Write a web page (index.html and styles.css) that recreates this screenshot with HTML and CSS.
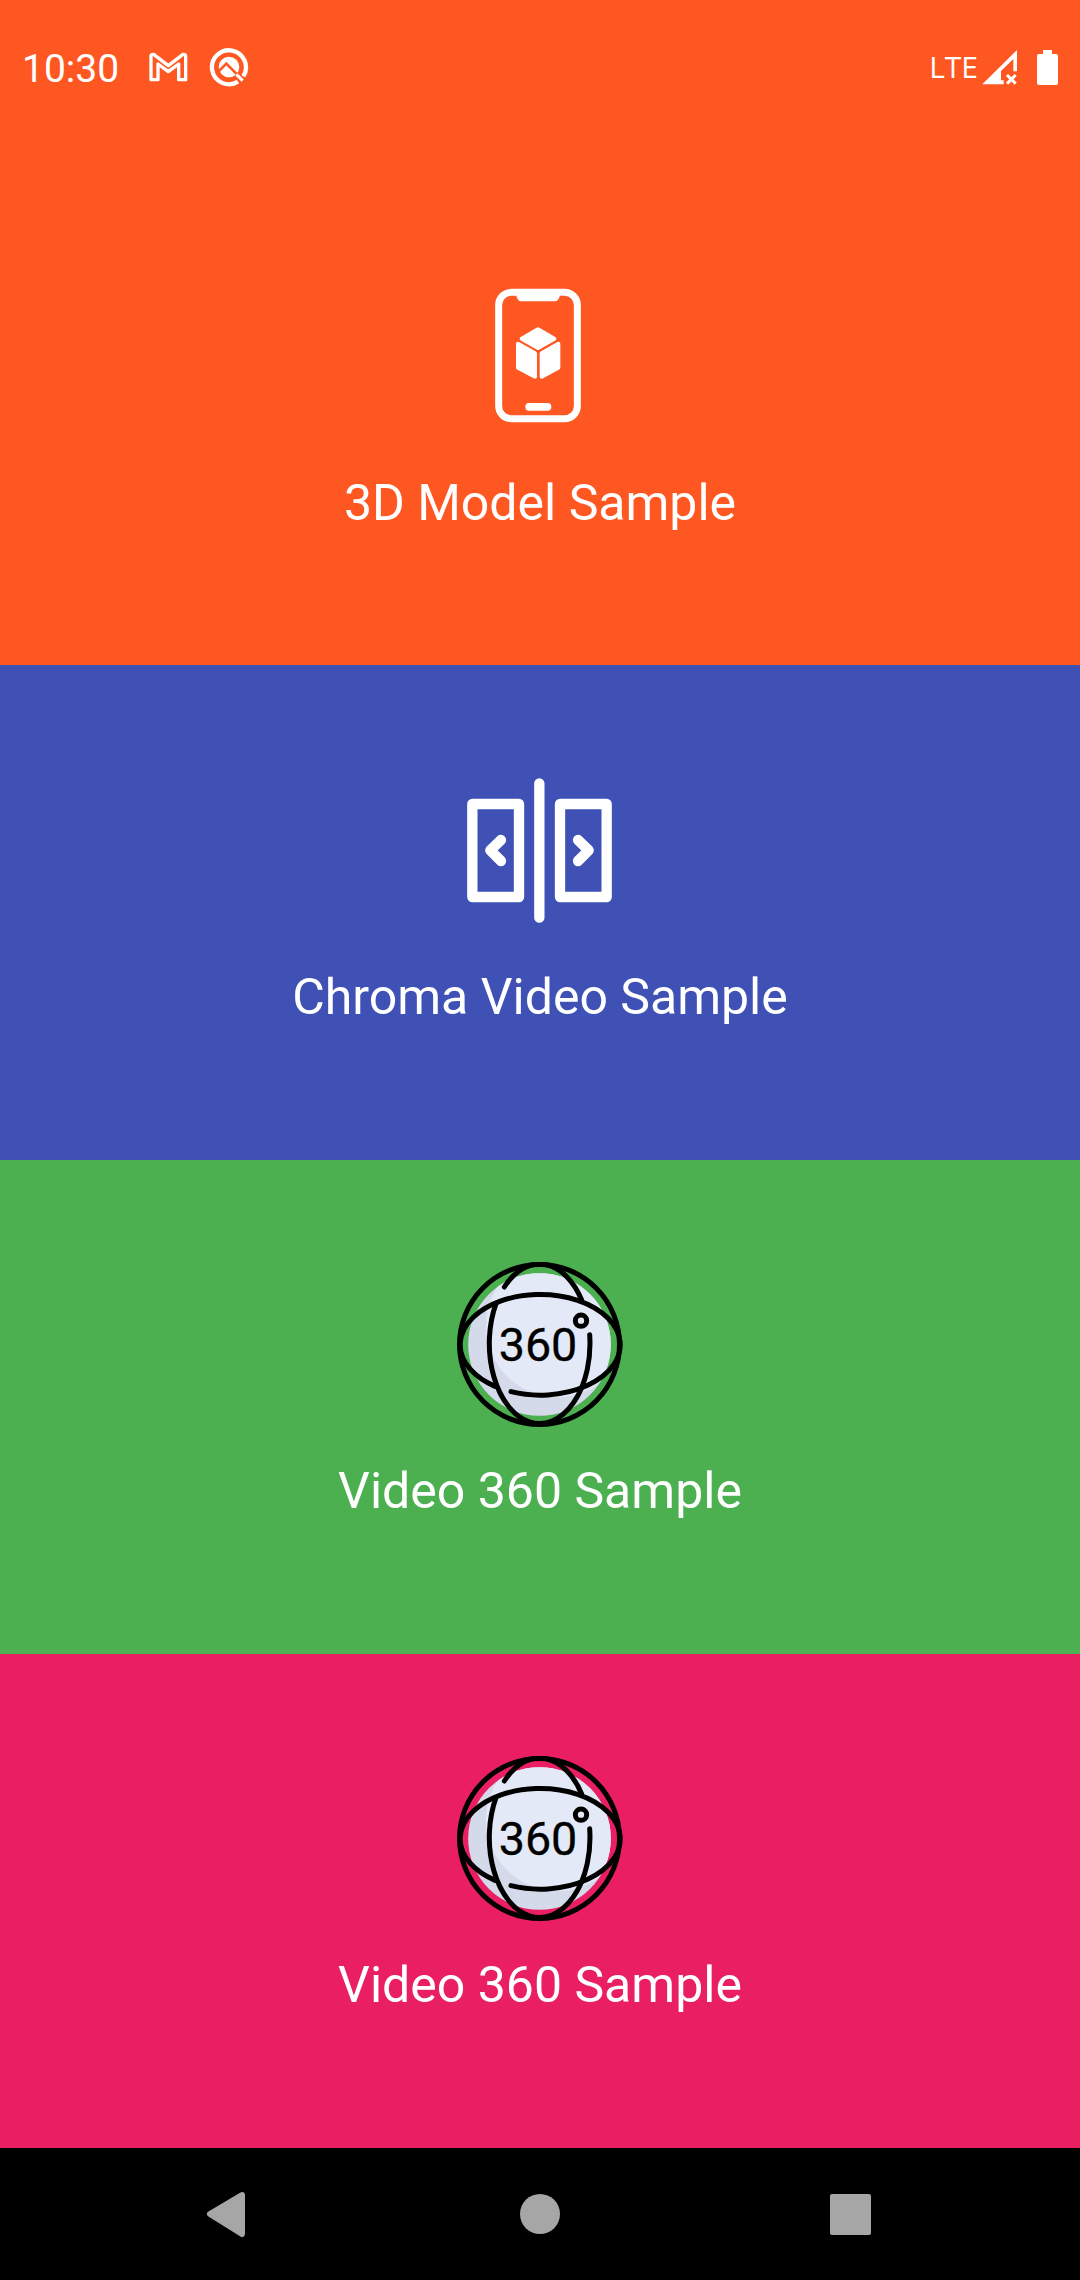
FILE: index.html
```html
<!DOCTYPE html>
<html lang="en">
<head>
  <meta charset="utf-8">
  <meta name="viewport" content="width=device-width, initial-scale=1">
  <title>Samples</title>
  <link rel="stylesheet" href="styles.css">
</head>
<body>
  <header class="status">
    <div class="status-group">
      <time class="clock">10:30</time>
      <svg class="mail" viewBox="444 62 123 96" aria-hidden="true">
        <path d="M453 148V78Q453 71 461 72L505 106L549 72Q557 71 557 78V148H536V101L505 124L474 101V148Z" fill="none" stroke="#fff" stroke-width="10" stroke-linejoin="round"/>
      </svg>
      <svg class="badge" viewBox="628 51 120 120" aria-hidden="true">
        <path d="M715 155A51 51 0 1 1 731 139" fill="none" stroke="#fff" stroke-width="13"/>
        <circle cx="688" cy="111" r="31" fill="#fff"/>
        <path d="M652 129L680 101L722 143" fill="none" stroke="#ff5722" stroke-width="8"/>
        <path d="M710 133L729 152" stroke="#fff" stroke-width="9"/>
      </svg>
    </div>
    <div class="status-group">
      <span class="network">LTE</span>
      <svg class="signal" viewBox="246 58 108 108" aria-hidden="true">
        <path d="M351 61V125H340V88L303 124V152H311V164H247Z" fill="#fff"/>
        <path d="M321 136L347 162M347 136L321 162" stroke="#fff" stroke-width="9"/>
      </svg>
      <svg class="battery" viewBox="0 0 21 35" aria-hidden="true">
        <path d="M6 0h9v4h4q2 0 2 2v27q0 2-2 2H2q-2 0-2-2V6q0-2 2-2h4z" fill="#fff"/>
      </svg>
    </div>
  </header>

  <main class="tiles">
    <a class="tile orange" href="#model">
      <svg class="tile-icon" viewBox="-69 12 498 495" aria-hidden="true">
        <rect x="56" y="67" width="236" height="379" rx="38" fill="none" stroke="#fff" stroke-width="21"/>
        <path d="M108 68H240Q239 94 224 94H124Q110 94 108 68Z" fill="#fff"/>
        <rect x="136" y="399" width="78" height="23" rx="11" fill="#fff"/>
        <g fill="#fff" stroke="#fff" stroke-width="12" stroke-linejoin="round">
          <path d="M174 178L223 206L174 234L125 206Z"/>
          <path d="M114 221L165 250V320L114 293Z"/>
          <path d="M235 221L185 250V320L235 293Z"/>
        </g>
      </svg>
      <span class="tile-label">3D Model Sample</span>
    </a>
    <a class="tile blue" href="#chroma">
      <svg class="tile-icon" viewBox="21 24 498 495" fill="none" stroke="#fff" stroke-width="31" stroke-linecap="round" stroke-linejoin="round" aria-hidden="true">
        <rect x="67" y="132" width="140" height="279"/>
        <rect x="330" y="132" width="140" height="279"/>
        <path d="M268 70V473M153 240L121 271L153 303M384 240L416 271L384 303"/>
      </svg>
      <span class="tile-label">Chroma Video Sample</span>
    </a>
    <a class="tile green" href="#video-360">
      <svg class="tile-icon" viewBox="36 36 498 495" aria-hidden="true">
        <clipPath id="ball-green"><circle cx="283.500" cy="283.500" r="214"/></clipPath>
        <circle cx="283.500" cy="283.500" r="214" fill="#d5daeb"/>
        <circle cx="337" cy="227" r="214" fill="#e4e9f7" clip-path="url(#ball-green)"/>
        <g fill="none" stroke="#000" stroke-width="15" stroke-linecap="round">
          <circle cx="283.500" cy="283.500" r="240"/>
          <path d="M434 254A151 240 0 1 1 153 161M178 111A151 240 0 0 1 410 150"/>
          <path d="M198 425A240 151 0 1 0 150 409"/>
          <circle cx="408" cy="212" r="17"/>
        </g>
        <text class="globe-text" x="279" y="333" text-anchor="middle">360</text>
      </svg>
      <span class="tile-label">Video 360 Sample</span>
    </a>
    <a class="tile pink" href="#video-360-more">
      <svg class="tile-icon" viewBox="36 36 498 495" aria-hidden="true">
        <clipPath id="ball-pink"><circle cx="283.500" cy="283.500" r="214"/></clipPath>
        <circle cx="283.500" cy="283.500" r="214" fill="#d5daeb"/>
        <circle cx="337" cy="227" r="214" fill="#e4e9f7" clip-path="url(#ball-pink)"/>
        <g fill="none" stroke="#000" stroke-width="15" stroke-linecap="round">
          <circle cx="283.500" cy="283.500" r="240"/>
          <path d="M434 254A151 240 0 1 1 153 161M178 111A151 240 0 0 1 410 150"/>
          <path d="M198 425A240 151 0 1 0 150 409"/>
          <circle cx="408" cy="212" r="17"/>
        </g>
        <text class="globe-text" x="279" y="333" text-anchor="middle">360</text>
      </svg>
      <span class="tile-label">Video 360 Sample</span>
    </a>
  </main>

  <nav class="system-nav" aria-label="System">
    <button class="nav-button" type="button" aria-label="Back">
      <svg viewBox="0 0 60 60"><path d="M43 11L11 30L43 50Z" stroke-width="6" stroke-linejoin="round"/></svg>
    </button>
    <button class="nav-button" type="button" aria-label="Home">
      <svg viewBox="0 0 60 60"><circle cx="30" cy="30" r="20" stroke="none"/></svg>
    </button>
    <button class="nav-button" type="button" aria-label="Recent apps">
      <svg viewBox="0 0 60 60"><rect x="11" y="12" width="37" height="37" stroke-width="4" stroke-linejoin="round"/></svg>
    </button>
  </nav>
</body>
</html>
```
FILE: styles.css
```css
* {
  box-sizing: border-box;
}

body {
  display: flex;
  flex-direction: column;
  min-height: 100vh;
  margin: 0;
  background: #ff5722;
  color: #fff;
  font-family: Roboto, "Noto Sans", sans-serif;
}

.status {
  display: flex;
  justify-content: space-between;
  align-items: flex-start;
  height: 171px;
  padding: 47px 22px 0;
}

.status-group {
  display: flex;
  align-items: center;
  height: 40px;
}

.clock {
  margin-right: 29px;
  padding-top: 4px;
  font-size: 39px;
  line-height: 40px;
}

.mail {
  width: 41px;
  height: 32px;
  margin-right: 20px;
}

.badge {
  width: 40px;
  height: 40px;
}

.network {
  margin-right: 4px;
  font-family: "Open Sans", "Noto Sans", sans-serif;
  font-size: 30px;
  line-height: 40px;
}

.signal {
  width: 36px;
  height: 36px;
  margin-right: 19px;
}

.battery {
  width: 21px;
  height: 35px;
}

.tiles {
  display: grid;
  flex: 1;
  grid-auto-rows: 1fr;
}

.tile {
  display: flex;
  flex-direction: column;
  align-items: center;
  justify-content: center;
  gap: 34px;
  padding: 32px 16px 62px;
  color: #fff;
  text-decoration: none;
}

.orange {
  background: #ff5722;
}

.blue {
  background: #3f51b5;
}

.green {
  background: #4caf50;
}

.pink {
  background: #e91e63;
}

.tile-icon {
  width: 166px;
  height: 165px;
}

.tile-label {
  font-size: 50px;
  line-height: 60px;
  text-align: center;
}

.globe-text {
  fill: #000;
  stroke: #000;
  stroke-width: 1px;
  stroke-linejoin: round;
  font-family: Roboto, sans-serif;
  font-size: 140px;
}

.system-nav {
  display: grid;
  grid-template-columns: repeat(3, 1fr);
  height: 132px;
  padding: 0 74px;
  background: #000;
}

.nav-button {
  display: flex;
  align-items: center;
  justify-content: center;
  padding: 0;
  border: 0;
  background: none;
}

.nav-button svg {
  width: 60px;
  height: 60px;
  fill: #a6a6a6;
  stroke: #a6a6a6;
}
```
